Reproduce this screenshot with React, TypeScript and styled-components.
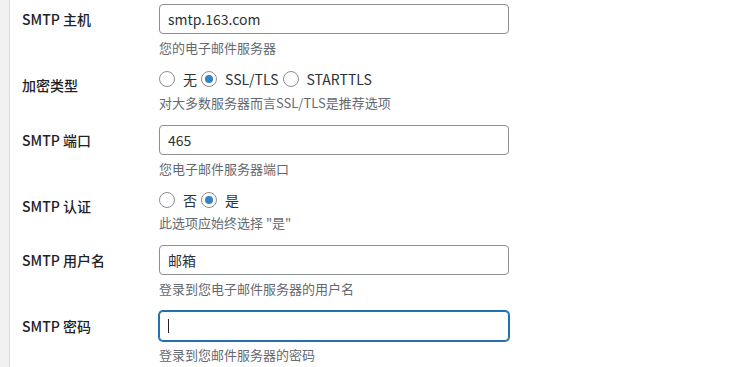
import styled, { createGlobalStyle } from "styled-components";

const GlobalStyle = createGlobalStyle`
  html, body {
    margin: 0;
    padding: 0;
    background: #ffffff;
    overflow: hidden;
  }
  body {
    font-family: "Segoe UI", "Noto Sans CJK SC", "Noto Sans", sans-serif;
    color: #1d2327;
  }
`;

type Field =
  | { kind: "text"; label: string; value: string; desc: string; focused?: boolean }
  | { kind: "radio"; label: string; options: string[]; checked: number; desc: string };

const fields: Field[] = [
  { kind: "text", label: "SMTP 主机", value: "smtp.163.com", desc: "您的电子邮件服务器" },
  {
    kind: "radio",
    label: "加密类型",
    options: ["无", "SSL/TLS", "STARTTLS"],
    checked: 1,
    desc: "对大多数服务器而言SSL/TLS是推荐选项",
  },
  { kind: "text", label: "SMTP 端口", value: "465", desc: "您电子邮件服务器端口" },
  { kind: "radio", label: "SMTP 认证", options: ["否", "是"], checked: 1, desc: "此选项应始终选择 \"是\"" },
  { kind: "text", label: "SMTP 用户名", value: "邮箱", desc: "登录到您电子邮件服务器的用户名" },
  { kind: "text", label: "SMTP 密码", value: "", desc: "登录到您邮件服务器的密码", focused: true },
];

const App = () => {
  return (
    <>
      <GlobalStyle />
      <Page>
        <SideStrip />
        <Content>
          <FormTable>
            {fields.map((f) => (
              <Row key={f.label}>
                <Th>{f.label}</Th>
                <Td>
                  {f.kind === "text" ? (
                    <InputWrap>
                      <TextInput $focused={f.focused} defaultValue={f.value} readOnly />
                      {f.focused && <Caret />}
                    </InputWrap>
                  ) : (
                    <RadioLine>
                      {f.options.map((o, i) => (
                        <RadioLabel key={o}>
                          <Radio $checked={i === f.checked} />
                          {o}
                        </RadioLabel>
                      ))}
                    </RadioLine>
                  )}
                  <Description>{f.desc}</Description>
                </Td>
              </Row>
            ))}
          </FormTable>
        </Content>
      </Page>
    </>
  );
};

export default App;

const Page = styled.div`
  display: flex;
  height: 367px;
`;

const SideStrip = styled.div`
  width: 9px;
  flex-shrink: 0;
  background: #f0f0f1;
  border-right: 1px solid #dcdcde;
`;

const Content = styled.div`
  flex: 1;
  padding-left: 12px;
  margin-top: -2px;
`;

const FormTable = styled.div`
  display: flex;
  flex-direction: column;
`;

const Row = styled.div`
  display: grid;
  grid-template-columns: 137px 1fr;
`;

const Th = styled.div`
  padding-top: 12px;
  font-size: 14px;
  line-height: 18px;
  font-weight: 500;
  color: #1d2327;
`;

const Td = styled.div`
  padding: 6px 10px 6px 0;
  display: flex;
  flex-direction: column;
  align-items: flex-start;
`;

const InputWrap = styled.div`
  position: relative;
  width: 350px;
`;

const TextInput = styled.input<{ $focused?: boolean }>`
  box-sizing: border-box;
  width: 350px;
  height: 30px;
  margin: 0;
  padding: 0 8px;
  border: 1px solid ${(p) => (p.$focused ? "#2271b1" : "#8c8f94")};
  box-shadow: ${(p) => (p.$focused ? "0 0 0 1px #2271b1" : "none")};
  border-radius: 4px;
  background: #fff;
  color: #2c3338;
  font-family: inherit;
  font-size: 14px;
  outline: none;
`;

const Caret = styled.span`
  position: absolute;
  left: 9px;
  top: 8px;
  width: 1px;
  height: 14px;
  background: #1d2327;
`;

const RadioLine = styled.div`
  display: flex;
  align-items: center;
  gap: 4px;
  height: 18.5px;
  font-size: 14px;
  color: #2c3338;
`;

const RadioLabel = styled.label`
  display: flex;
  align-items: center;
  gap: 8px;
`;

const Radio = styled.span<{ $checked?: boolean }>`
  box-sizing: border-box;
  width: 16px;
  height: 16px;
  border-radius: 50%;
  border: 1px solid #8c8f94;
  background: #fff;
  display: flex;
  align-items: center;
  justify-content: center;
  &::before {
    content: "";
    width: 8px;
    height: 8px;
    border-radius: 50%;
    background: #3582c4;
    display: ${(p) => (p.$checked ? "block" : "none")};
  }
`;

const Description = styled.p`
  margin: 4px 0 0;
  font-size: 13px;
  line-height: 20px;
  color: #646970;
`;
